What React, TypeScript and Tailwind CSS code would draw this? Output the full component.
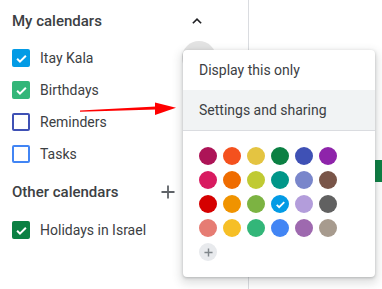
import React from "react";

const palette = [
  ["#ad1457", "#f4511e", "#e4c441", "#0b8043", "#3f51b5", "#8e24aa"],
  ["#d81b60", "#ef6c00", "#c0ca33", "#009688", "#7986cb", "#795548"],
  ["#d50000", "#f09300", "#7cb342", "#039be5", "#b39ddb", "#616161"],
  ["#e67c73", "#f6bf26", "#33b679", "#4285f4", "#9e69af", "#a79b8e"],
];

function Check({ className = "" }: { className?: string }) {
  return (
    <svg viewBox="0 0 24 24" className={className} fill="none">
      <path d="M5 12.5l4.5 4.5L19 7.5" stroke="white" strokeWidth="3.2" />
    </svg>
  );
}

function CalRow({
  label,
  color,
  checked,
}: {
  label: string;
  color: string;
  checked: boolean;
}) {
  return (
    <div className="flex h-8 items-center gap-[10px] pl-3">
      {checked ? (
        <div
          className="flex h-[18px] w-[18px] items-center justify-center rounded-[2px]"
          style={{ backgroundColor: color }}
        >
          <Check className="h-[15px] w-[15px]" />
        </div>
      ) : (
        <div
          className="h-[18px] w-[18px] rounded-[2px] border-2"
          style={{ borderColor: color }}
        />
      )}
      <span className="text-[14px] text-[#3c4043]">{label}</span>
    </div>
  );
}

export default function App() {
  return (
    <div className="relative flex h-[289px] w-[382px] overflow-hidden bg-white font-['Roboto',sans-serif]">
      {/* sidebar */}
      <div className="flex w-[249px] shrink-0 flex-col border-r border-[#dadce0]">
        <div className="flex h-[42px] items-center justify-between pl-3 pr-[42px]">
          <span className="text-[15px] font-medium text-[#3c4043]">My calendars</span>
          <svg viewBox="0 0 24 24" className="h-[18px] w-[18px]" fill="none">
            <path d="M6.5 15l5.5-5.5 5.5 5.5" stroke="#202124" strokeWidth="2.2" />
          </svg>
        </div>
        <CalRow label="Itay Kala" color="#039be5" checked />
        <CalRow label="Birthdays" color="#33b679" checked />
        <CalRow label="Reminders" color="#3f51b5" checked={false} />
        <CalRow label="Tasks" color="#4285f4" checked={false} />
        <div className="flex h-[44px] items-center justify-between pl-3 pr-[73px]">
          <span className="text-[15px] font-medium text-[#3c4043]">Other calendars</span>
          <svg viewBox="0 0 14 14" className="h-[14px] w-[14px]" fill="none">
            <path d="M7 0.5v13M0.5 7h13" stroke="#5f6368" strokeWidth="1.8" />
          </svg>
        </div>
        <CalRow label="Holidays in Israel" color="#0b8043" checked />
      </div>

      <div className="flex-1" />

      {/* event chip behind the menu */}
      <div className="absolute left-[373px] top-[160px] flex h-[22px] w-[12px] bg-[#0b8043]">
        <div className="h-full w-[2px] bg-[#c9b13a]" />
      </div>

      {/* hover circle of the options button */}
      <div className="absolute left-[182px] top-[41px] h-[34px] w-[34px] rounded-full bg-[#e3e3e3]" />

      {/* menu */}
      <div className="absolute left-[183px] top-[50px] w-[192px] rounded-[4px] bg-white shadow-[0_4px_8px_3px_rgba(60,64,67,0.15),0_1px_3px_rgba(60,64,67,0.3)]">
        <div className="flex h-10 items-center pl-4 text-[14px] text-[#3c4043]">Display this only</div>
        <div className="flex h-10 items-center bg-[#f1f3f4] pl-4 text-[14px] text-[#3c4043]">
          Settings and sharing
        </div>
        <div className="border-t border-[#dadce0] px-4 pb-4 pt-4">
          <div className="grid w-max grid-cols-6 gap-[6px]">
            {palette.flat().map((c) => (
              <div
                key={c}
                className="flex h-[18px] w-[18px] items-center justify-center rounded-full"
                style={{ backgroundColor: c }}
              >
                {c === "#039be5" && <Check className="h-[13px] w-[13px]" />}
              </div>
            ))}
            <div className="flex h-[18px] w-[18px] items-center justify-center rounded-full bg-[#e8eaed]">
              <svg viewBox="0 0 10 10" className="h-[9px] w-[9px]" fill="none">
                <path d="M5 0.5v9M0.5 5h9" stroke="#80868b" strokeWidth="1.6" />
              </svg>
            </div>
          </div>
        </div>
      </div>

      {/* red annotation arrow */}
      <svg className="pointer-events-none absolute left-0 top-0 h-[289px] w-[382px]" viewBox="0 0 382 289">
        <polygon points="80,110.6 156,106.6 156,109.6 80,111.8" fill="#f00" />
        <polygon points="155,102.5 176,107.8 155,115" fill="#f00" />
      </svg>
    </div>
  );
}
